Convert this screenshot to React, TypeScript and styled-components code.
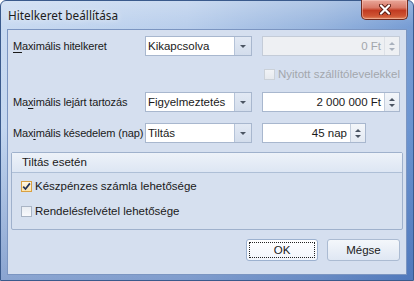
import React from "react";
import styled, { createGlobalStyle } from "styled-components";

const Global = createGlobalStyle`
  html, body { margin: 0; padding: 0; }
  body { width: 414px; height: 281px; overflow: hidden; background: #ffffff; }
`;

const Window = styled.div`
  width: 414px;
  height: 281px;
  box-sizing: border-box;
  border: 1px solid #3a5a8c;
  border-radius: 6px 6px 0 0;
  background:
    linear-gradient(to bottom, rgba(255, 255, 255, 0.3) 0px, rgba(255, 255, 255, 0.08) 26px, rgba(40, 80, 150, 0) 45%, rgba(30, 70, 150, 0.35) 100%),
    linear-gradient(to right, #c4d7f0 0%, #b3caea 45%, #8eaedb 78%, #6b94d0 100%);
  display: flex;
  flex-direction: column;
  font-family: "Liberation Sans", Arial, sans-serif;
  font-size: 11.5px;
  color: #1a1a1a;
`;

const TitleBar = styled.div`
  height: 28px;
  display: flex;
  align-items: flex-start;
  justify-content: space-between;
  padding-left: 7px;
`;

const Title = styled.div`
  font-family: "Noto Sans", "Open Sans", sans-serif;
  font-size: 11.8px;
  line-height: 29px;
  color: #1c1c1c;
  text-shadow: 0 0 6px rgba(255, 255, 255, 0.9);
`;

const CloseButton = styled.div`
  width: 45px;
  height: 19px;
  margin-top: -1px;
  margin-right: 5px;
  border: 1px solid #6e2a1f;
  border-top: none;
  border-radius: 0 0 5px 5px;
  background: linear-gradient(to bottom, #e9a79a 0%, #d97a68 40%, #c23b22 55%, #cf5534 85%, #e08a62 100%);
  box-shadow: inset 0 0 0 1px rgba(255, 210, 200, 0.45);
  display: flex;
  align-items: center;
  justify-content: center;
`;

const Client = styled.div`
  flex: 1;
  margin: 0 6px 5px 6px;
  border: 1px solid #7b95c1;
  background: #d5dfef;
  padding: 6px 3px 9px 3px;
  display: flex;
  flex-direction: column;
`;

const FormGrid = styled.div`
  display: grid;
  grid-template-columns: 122px 107px 138px;
  grid-template-rows: 20px 14px 20px 20px;
  column-gap: 10px;
  row-gap: 11px;
  padding: 0 3px 0 2px;
  align-items: center;
`;

const Label = styled.div`
  white-space: nowrap;
  font-size: 11px;
  letter-spacing: -0.15px;
  u { text-decoration: underline; text-underline-offset: 2px; }
`;

const Combo = styled.div`
  height: 20px;
  box-sizing: border-box;
  border: 1px solid #a8b7ce;
  background: #ffffff;
  display: flex;
`;

const ComboText = styled.div`
  flex: 1;
  padding-left: 2px;
  line-height: 18px;
  white-space: nowrap;
  overflow: hidden;
`;

const ComboButton = styled.div`
  width: 16px;
  border-left: 1px solid #b5c3d8;
  background: linear-gradient(to bottom, #e2e9f4, #d3ddec);
  display: flex;
  align-items: center;
  justify-content: center;
`;

const Arrow = styled.div<{ $up?: boolean; $dim?: boolean }>`
  width: 0;
  height: 0;
  border-left: 3px solid transparent;
  border-right: 3px solid transparent;
  ${(p) =>
    p.$up
      ? `border-bottom: 3px solid ${p.$dim ? "#a9b1bd" : "#4b5563"};`
      : `border-top: 3px solid ${p.$dim ? "#a9b1bd" : "#4b5563"};`}
`;

const SpinBox = styled.div<{ $width: number; $disabled?: boolean }>`
  width: ${(p) => p.$width}px;
  height: 20px;
  box-sizing: border-box;
  border: 1px solid ${(p) => (p.$disabled ? "#c4ccd8" : "#a8b7ce")};
  background: ${(p) => (p.$disabled ? "#eef0f3" : "#ffffff")};
  color: ${(p) => (p.$disabled ? "#a2a6ac" : "#1a1a1a")};
  display: flex;
`;

const SpinValue = styled.div`
  flex: 1;
  text-align: right;
  padding-right: 3px;
  line-height: 18px;
  white-space: nowrap;
`;

const SpinButtons = styled.div<{ $disabled?: boolean }>`
  width: 14px;
  border-left: 1px solid ${(p) => (p.$disabled ? "#dde1e7" : "#c3cedd")};
  background: ${(p) => (p.$disabled ? "transparent" : "linear-gradient(to bottom, #f3f6fa, #e3e9f2)")};
  display: flex;
  flex-direction: column;
  align-items: center;
  justify-content: center;
  gap: 3px;
`;

const CheckRow = styled.label<{ $disabled?: boolean; $alignEnd?: boolean }>`
  display: flex;
  align-items: center;
  gap: 3px;
  white-space: nowrap;
  justify-self: ${(p) => (p.$alignEnd ? "end" : "start")};
  color: ${(p) => (p.$disabled ? "#a3a7ad" : "#1a1a1a")};
`;

const Box = styled.div<{ $checked?: boolean; $disabled?: boolean }>`
  width: 11px;
  height: 11px;
  box-sizing: border-box;
  border: 1px solid ${(p) => (p.$checked ? "#d9a042" : p.$disabled ? "#cbd1d8" : "#a9b4c4")};
  background: ${(p) =>
    p.$checked
      ? "linear-gradient(to bottom, #fff8e6, #fde3a8)"
      : p.$disabled
      ? "linear-gradient(to bottom, #f1f3f6, #e6e9ee)"
      : "linear-gradient(to bottom, #e9edf3, #f9fafc)"};
  display: flex;
  align-items: center;
  justify-content: center;
`;

const Group = styled.div`
  margin-top: 9px;
  border: 1px solid #9fb1cc;
  border-radius: 2px;
  background: #d6e0ef;
`;

const GroupHeader = styled.div`
  height: 19px;
  line-height: 19px;
  padding-left: 10px;
  border-bottom: 1px solid #aebfd6;
  background: linear-gradient(to bottom, #edf2f9, #dde6f3);
`;

const GroupBody = styled.div`
  display: flex;
  flex-direction: column;
  gap: 13px;
  padding: 7px 9px 12px 9px;
`;

const ButtonRow = styled.div`
  margin-top: 9px;
  display: flex;
  justify-content: flex-end;
  gap: 9px;
  padding-right: 3px;
`;

const Button = styled.div<{ $width: number; $focused?: boolean }>`
  position: relative;
  width: ${(p) => p.$width}px;
  height: 22px;
  box-sizing: border-box;
  border: 1px solid ${(p) => (p.$focused ? "#9cb1cf" : "#abbbd2")};
  border-radius: 3px;
  background: ${(p) =>
    p.$focused ? "linear-gradient(to bottom, #ffffff, #f1f5fb)" : "linear-gradient(to bottom, #f4f7fb, #dfe7f3)"};
  display: flex;
  align-items: center;
  justify-content: center;
  ${(p) =>
    p.$focused
      ? `&::after { content: ""; position: absolute; inset: 2px; border: 1px dotted #222; }`
      : ""}
`;

const CloseIcon = () => (
  <svg width="12" height="11" viewBox="0 0 12 11">
    <path d="M2 1.5 L10 9.5 M10 1.5 L2 9.5" stroke="#5a1a10" strokeWidth="4" strokeLinecap="round" />
    <path d="M2 1.5 L10 9.5 M10 1.5 L2 9.5" stroke="#ffffff" strokeWidth="2.2" strokeLinecap="round" />
  </svg>
);

const Check = () => (
  <svg width="9" height="9" viewBox="0 0 9 9">
    <path d="M1.2 4.6 L3.5 7 L7.9 1.4" stroke="#22325a" strokeWidth="1.7" fill="none" />
  </svg>
);

const ComboBox = ({ value }: { value: string }) => (
  <Combo>
    <ComboText>{value}</ComboText>
    <ComboButton>
      <Arrow />
    </ComboButton>
  </Combo>
);

const Spin = ({ value, width, disabled }: { value: string; width: number; disabled?: boolean }) => (
  <SpinBox $width={width} $disabled={disabled}>
    <SpinValue>{value}</SpinValue>
    <SpinButtons $disabled={disabled}>
      <Arrow $up $dim={disabled} />
      <Arrow $dim={disabled} />
    </SpinButtons>
  </SpinBox>
);

const CheckBox = ({
  label,
  checked,
  disabled,
  alignEnd,
}: {
  label: string;
  checked?: boolean;
  disabled?: boolean;
  alignEnd?: boolean;
}) => (
  <CheckRow $disabled={disabled} $alignEnd={alignEnd}>
    <Box $checked={checked} $disabled={disabled}>{checked && <Check />}</Box>
    {label}
  </CheckRow>
);

export default function App() {
  return (
    <>
      <Global />
      <Window>
        <TitleBar>
          <Title>Hitelkeret beállítása</Title>
          <CloseButton>
            <CloseIcon />
          </CloseButton>
        </TitleBar>
        <Client>
          <FormGrid>
            <Label>
              <u>M</u>aximális hitelkeret
            </Label>
            <ComboBox value="Kikapcsolva" />
            <Spin value="0 Ft" width={138} disabled />

            <div />
            <div />
            <CheckBox label="Nyitott szállítólevelekkel" disabled alignEnd />

            <Label>
              Ma<u>x</u>imális lejárt tartozás
            </Label>
            <ComboBox value="Figyelmeztetés" />
            <Spin value="2 000 000 Ft" width={138} />

            <Label>
              Max<u>i</u>mális késedelem (nap)
            </Label>
            <ComboBox value="Tiltás" />
            <Spin value="45 nap" width={104} />
          </FormGrid>

          <Group>
            <GroupHeader>Tiltás esetén</GroupHeader>
            <GroupBody>
              <CheckBox label="Készpénzes számla lehetősége" checked />
              <CheckBox label="Rendelésfelvétel lehetősége" />
            </GroupBody>
          </Group>

          <ButtonRow>
            <Button $width={72} $focused>
              OK
            </Button>
            <Button $width={73}>Mégse</Button>
          </ButtonRow>
        </Client>
      </Window>
    </>
  );
}
